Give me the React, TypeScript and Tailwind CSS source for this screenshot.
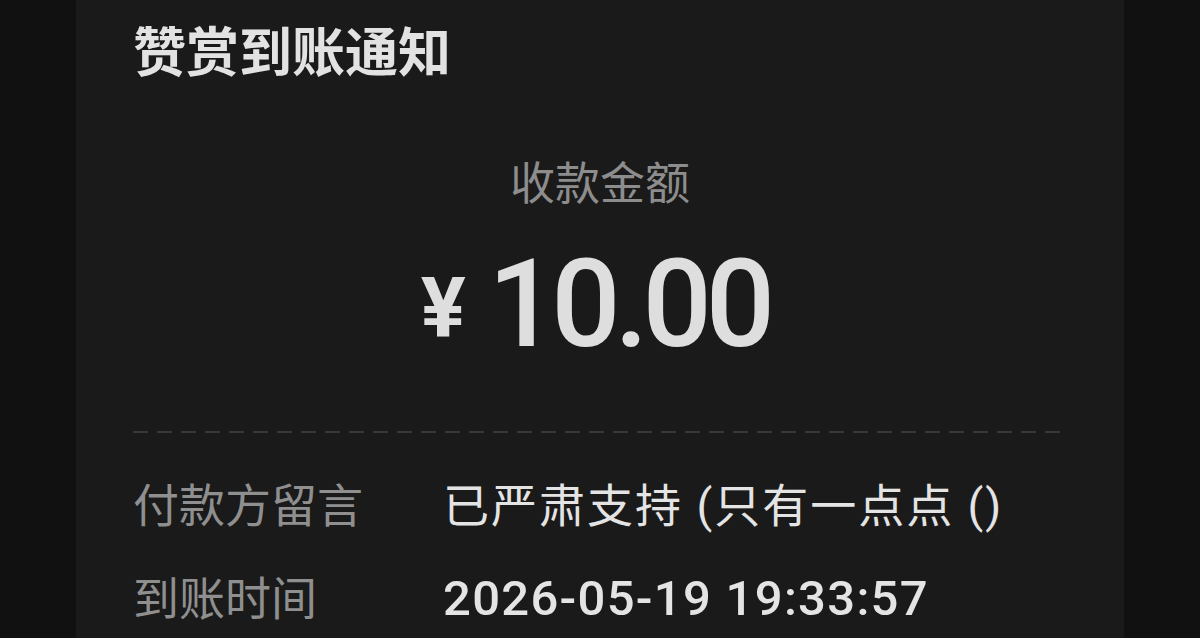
const rows = [
  { label: "付款方留言", value: "已严肃支持 (只有一点点 ()", valueClass: "text-[46px] tracking-[2px]" },
  { label: "到账时间", value: "2026-05-19 19:33:57", valueClass: "text-[49px] font-medium tracking-[1.3px]" },
];

export default function App() {
  return (
    <div
      className="flex h-[638px] w-[1200px] justify-center overflow-hidden bg-[#111111]"
      style={{ fontFamily: '"Roboto", "Noto Sans CJK SC", sans-serif' }}
    >
      <div className="flex w-[1048px] flex-col bg-[#1a1a1a] px-[57px]">
        <h1 className="pt-[28px] text-[53px] leading-[53px] font-bold text-[#e2e2e2]">
          赞赏到账通知
        </h1>

        <div className="mt-[81px] flex flex-col items-center">
          <div className="text-[45px] leading-[45px] text-[#8d8d8d]">收款金额</div>
          <div className="mt-[43px] flex items-end pr-[10px] text-[#dedede]">
            <span className="mb-[9px] text-[84px] leading-[84px] font-bold">¥</span>
            <span className="ml-[22px] text-[122px] leading-[110px] font-medium tracking-[-6px]">
              10.00
            </span>
          </div>
        </div>

        <div className="mt-[71px] h-[2px] w-full bg-[repeating-linear-gradient(90deg,#383838_0_15px,transparent_15px_24px)]" />

        <div className="mt-[49px] flex flex-col gap-[45px]">
          {rows.map((row) => (
            <div key={row.label} className="flex items-center text-[46px] leading-[48px]">
              <div className="w-[310px] shrink-0 text-[#8f8f8f]">{row.label}</div>
              <div className={`text-[#e4e4e4] ${row.valueClass}`}>{row.value}</div>
            </div>
          ))}
        </div>
      </div>
    </div>
  );
}
